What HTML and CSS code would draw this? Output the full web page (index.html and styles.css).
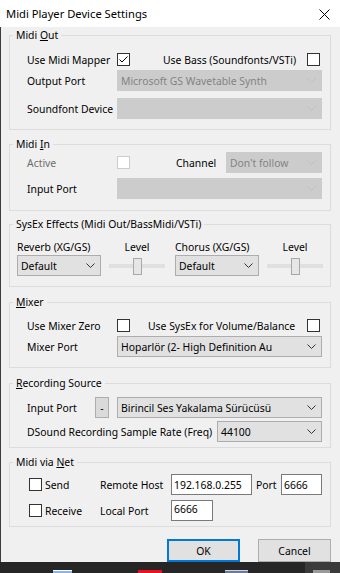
FILE: index.html
```html
<!DOCTYPE html>
<html lang="en">
<head>
    <title>Midi Player Device Settings</title>
    <meta charset="UTF-8">
    <link rel="stylesheet" href="styles.css">
</head>
<body>
    <div class="window">
        <div class="titlebar">
            <span class="title">Midi Player Device Settings</span>
            <svg class="close" width="11" height="11" viewBox="0 0 11 11"><path d="M0.5 0.5L10.5 10.5M10.5 0.5L0.5 10.5" stroke="#000" stroke-width="1" fill="none"/></svg>
        </div>

        <div class="client">
            <!-- Midi Out -->
            <fieldset class="group out">
                <legend>Midi <u>O</u>ut</legend>
                <div class="gbody">
                    <div class="row">
                        <span class="lbl col-main">Use Midi Mapper</span>
                        <span class="chk"><svg width="11" height="11" viewBox="0 0 11 11"><polyline points="1.5,5.5 4,8 9.5,2.5" stroke="#000" stroke-width="1" fill="none"/></svg></span>
                        <span class="lbl col-bass">Use Bass (Soundfonts/VSTi)</span>
                        <span class="chk"></span>
                    </div>
                    <div class="row">
                        <span class="lbl col-main">Output Port</span>
                        <div class="combo dis wide"><span>Microsoft GS Wavetable Synth</span><svg width="9" height="5" viewBox="0 0 9 5"><polyline points="0.5,0.5 4.5,4.5 8.5,0.5"/></svg></div>
                    </div>
                    <div class="row">
                        <span class="lbl col-main">Soundfont Device</span>
                        <div class="combo dis wide"><span></span><svg width="9" height="5" viewBox="0 0 9 5"><polyline points="0.5,0.5 4.5,4.5 8.5,0.5"/></svg></div>
                    </div>
                </div>
            </fieldset>

            <!-- Midi In -->
            <fieldset class="group in">
                <legend>Midi <u>I</u>n</legend>
                <div class="gbody">
                    <div class="row">
                        <span class="lbl col-main muted">Active</span>
                        <span class="chk off"></span>
                        <span class="lbl col-channel">Channel</span>
                        <div class="combo dis channel"><span>Don't follow</span><svg width="9" height="5" viewBox="0 0 9 5"><polyline points="0.5,0.5 4.5,4.5 8.5,0.5"/></svg></div>
                    </div>
                    <div class="row">
                        <span class="lbl col-main">Input Port</span>
                        <div class="combo dis wide"><span></span><svg width="9" height="5" viewBox="0 0 9 5"><polyline points="0.5,0.5 4.5,4.5 8.5,0.5"/></svg></div>
                    </div>
                </div>
            </fieldset>

            <!-- SysEx Effects -->
            <fieldset class="group fx">
                <legend>SysEx Effects (Midi Out/BassMidi/VSTi)</legend>
                <div class="gbody">
                    <div class="row heads">
                        <span class="lbl col-fx">Reverb (XG/GS)</span>
                        <span class="lbl col-level">Level</span>
                        <span class="lbl col-fx">Chorus (XG/GS)</span>
                        <span class="lbl col-level">Level</span>
                    </div>
                    <div class="row">
                        <div class="combo fxsel"><span>Default</span><svg width="9" height="5" viewBox="0 0 9 5"><polyline points="0.5,0.5 4.5,4.5 8.5,0.5"/></svg></div>
                        <div class="slider"><span class="thumb"></span></div>
                        <div class="combo fxsel"><span>Default</span><svg width="9" height="5" viewBox="0 0 9 5"><polyline points="0.5,0.5 4.5,4.5 8.5,0.5"/></svg></div>
                        <div class="slider"><span class="thumb"></span></div>
                    </div>
                </div>
            </fieldset>

            <!-- Mixer -->
            <fieldset class="group mix">
                <legend><u>M</u>ixer</legend>
                <div class="gbody">
                    <div class="row">
                        <span class="lbl col-main">Use Mixer Zero</span>
                        <span class="chk"></span>
                        <span class="lbl col-sysex">Use SysEx for Volume/Balance</span>
                        <span class="chk"></span>
                    </div>
                    <div class="row">
                        <span class="lbl col-main">Mixer Port</span>
                        <div class="combo wide"><span>Hoparlör (2- High Definition Au</span><svg width="9" height="5" viewBox="0 0 9 5"><polyline points="0.5,0.5 4.5,4.5 8.5,0.5"/></svg></div>
                    </div>
                </div>
            </fieldset>

            <!-- Recording Source -->
            <fieldset class="group rec">
                <legend><u>R</u>ecording Source</legend>
                <div class="gbody">
                    <div class="row">
                        <span class="lbl col-input">Input Port</span>
                        <span class="mini">-</span>
                        <div class="combo wide"><span>Birincil Ses Yakalama Sürücüsü</span><svg width="9" height="5" viewBox="0 0 9 5"><polyline points="0.5,0.5 4.5,4.5 8.5,0.5"/></svg></div>
                    </div>
                    <div class="row">
                        <span class="lbl col-rate">DSound Recording Sample Rate (Freq)</span>
                        <div class="combo rate"><span>44100</span><svg width="9" height="5" viewBox="0 0 9 5"><polyline points="0.5,0.5 4.5,4.5 8.5,0.5"/></svg></div>
                    </div>
                </div>
            </fieldset>

            <!-- Midi via Net -->
            <fieldset class="group net">
                <legend>Midi via <u>N</u>et</legend>
                <div class="gbody">
                    <div class="row">
                        <span class="chk net-chk"></span>
                        <span class="lbl col-net">Send</span>
                        <span class="lbl col-host">Remote Host</span>
                        <span class="edit host">192.168.0.255</span>
                        <span class="lbl col-port">Port</span>
                        <span class="edit port">6666</span>
                    </div>
                    <div class="row">
                        <span class="chk net-chk"></span>
                        <span class="lbl col-net">Receive</span>
                        <span class="lbl col-host">Local Port</span>
                        <span class="edit port local">6666</span>
                    </div>
                </div>
            </fieldset>

            <div class="buttons">
                <button class="btn default">OK</button>
                <button class="btn">Cancel</button>
            </div>
        </div>

        <div class="taskbar">
            <span class="tb-icon tb-explorer"></span>
            <span class="tb-icon tb-red"></span>
            <span class="tb-icon tb-doc"></span>
            <span class="tb-active"><span class="tb-icon tb-grey"></span></span>
        </div>
    </div>
</body>
</html>
```

FILE: styles.css
```css
* { box-sizing: border-box; }
body {
    margin: 0;
    font-family: 'Noto Sans', 'DejaVu Sans', sans-serif;
    font-size: 10.4px;
    color: #000;
    background: #f0f0f0;
    overflow: hidden;
}
.window {
    width: 340px;
    height: 573px;
    display: flex;
    flex-direction: column;
}
.titlebar {
    height: 27px;
    flex: none;
    background: #fff;
    display: flex;
    align-items: center;
    justify-content: space-between;
    padding: 0 10px 0 6px;
}
.title { font-size: 11.2px; }
.close { margin-top: 1px; }

.client {
    flex: 1;
    background: #f0f0f0;
    padding: 0 9px 0 8px;
    border-left: 1px solid #3c3c3c;
}

/* group boxes */
.group {
    margin: 7px 0 0;
    padding: 0;
    border: 1px solid #dcdcdc;
    min-width: 0;
}
.group legend {
    margin-left: 3px;
    padding: 0 3px;
    line-height: 15px;
}
.gbody { padding: 0 0 10px 17px; }
.row {
    display: flex;
    align-items: center;
    height: 21px;
}
.lbl { flex: none; white-space: nowrap; }
.muted { color: #6d6d6d; }

.out { margin-top: 1px; }
.out .row:nth-child(1) { margin-top: 6px; }
.out .row:nth-child(3) { margin-top: 7px; }

.in .gbody { padding-bottom: 11px; }
.in .row:nth-child(2) { margin-top: 5px; }

.fx { margin-top: 6px; }
.fx .gbody { padding-left: 7px; }
.fx .heads { height: 15px; margin-top: 7px; }
.fx .row:nth-child(2) { margin-top: 1px; }

.mix { margin-top: 8px; }
.mix .row:nth-child(1) { margin-top: 5px; }

.rec { margin-top: 8px; }
.rec .gbody { padding-bottom: 5px; }
.rec .row:nth-child(1) { margin-top: 6px; }
.rec .row:nth-child(2) { margin-top: 3px; }

.net .gbody { padding-bottom: 5px; padding-left: 19px; }
.net .row:nth-child(1) { margin-top: 4px; }
.net .row:nth-child(2) { margin-top: 5px; }

/* column widths */
.col-main { width: 90px; }
.col-bass { width: 144px; margin-left: 33px; }
.col-channel { width: 50px; margin-left: 46px; }
.col-fx { width: 92px; }
.col-level { width: 56px; margin-right: 10px; text-align: center; }
.col-sysex { width: 159px; margin-left: 18px; }
.col-input { width: 68px; }
.col-rate { width: 190px; }
.col-net { width: 55px; margin-left: 3px; }
.col-host { width: 71px; }
.col-port { width: 25px; margin-left: 4px; }

/* checkbox */
.chk {
    flex: none;
    width: 13px;
    height: 13px;
    border: 1px solid #333;
    background: #fff;
    display: flex;
    align-items: center;
    justify-content: center;
}
.chk.off { border-color: #cccccc; }

/* combo boxes */
.combo {
    flex: none;
    height: 21px;
    border: 1px solid #adadad;
    background: #e1e1e1;
    display: flex;
    align-items: center;
    justify-content: space-between;
    padding: 0 5px 0 3px;
    white-space: nowrap;
    overflow: hidden;
}
.combo svg { flex: none; fill: none; stroke: #333; stroke-width: 1; }
.combo.dis { background: #cccccc; border-color: #cccccc; color: #838383; }
.combo.dis svg { stroke: #bfbfbf; }
.wide { width: 205px; }
.channel { width: 96px; }
.fxsel { width: 84px; margin-right: 8px; }
.rate { width: 105px; }

.mini {
    flex: none;
    width: 14px;
    height: 21px;
    margin-right: 8px;
    border: 1px solid #adadad;
    background: #dadada;
    display: flex;
    align-items: center;
    justify-content: center;
}

/* trackbar */
.slider {
    flex: none;
    width: 56px;
    height: 21px;
    margin-right: 10px;
    display: flex;
    align-items: center;
    justify-content: center;
    background: linear-gradient(#e0e0e0, #e0e0e0) center / 100% 4px no-repeat;
}
.thumb {
    width: 9px;
    height: 17px;
    border: 1px solid #a8a8a8;
    background: #e6e6e6;
    margin-top: 1px;
}

/* edit boxes */
.edit {
    flex: none;
    height: 21px;
    border: 1px solid #7a7a7a;
    background: #fff;
    padding: 0 2px;
    display: flex;
    align-items: center;
}
.host { width: 81px; }
.port { width: 41px; }
.local { width: 42px; align-items: flex-start; padding-top: 1px; }

/* dialog buttons */
.buttons {
    display: flex;
    justify-content: flex-end;
    gap: 18px;
    margin-top: 12px;
}
.btn {
    width: 73px;
    height: 23px;
    border: 1px solid #adadad;
    background: #e1e1e1;
    font: inherit;
    color: #000;
    padding: 0;
}
.btn.default { border: 2px solid #0078d7; }

/* taskbar strip under the dialog */
.taskbar {
    height: 11px;
    flex: none;
    background: #262626;
    display: flex;
    align-items: flex-end;
}
.tb-icon { height: 3px; flex: none; }
.tb-explorer { width: 19px; margin-left: 53px; background: #8fb4e6; border-top: 1px solid #fff; }
.tb-red { width: 24px; margin-left: 66px; background: #e81123; }
.tb-doc { width: 23px; margin-left: 63px; background: #6c7a96; border-top: 1px solid #c9d3e6; }
.tb-active {
    margin-left: 57px;
    width: 35px;
    height: 11px;
    background: #3b3b3b;
    display: flex;
    align-items: flex-end;
}
.tb-grey { width: 17px; margin-left: 8px; background: #9a9a9a; }
```
